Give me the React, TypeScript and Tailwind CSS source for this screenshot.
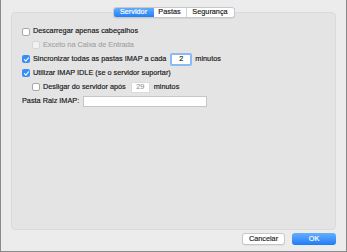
import React from "react";

const font = { fontFamily: '"Liberation Sans", Arial, sans-serif' };

function Checkbox({ checked = false, disabled = false }: { checked?: boolean; disabled?: boolean }) {
  if (checked) {
    return (
      <span className="flex size-[8px] shrink-0 items-center justify-center rounded-[2px] bg-[#3a8cf6]">
        <svg viewBox="0 0 8 8" className="size-[7px]">
          <path d="M1.6 4.2 L3.3 5.8 L6.4 2" fill="none" stroke="#fff" strokeWidth="1.3" strokeLinecap="round" strokeLinejoin="round" />
        </svg>
      </span>
    );
  }
  return (
    <span
      className={
        disabled
          ? "size-[8px] shrink-0 rounded-[2px] border border-[#d6d6d6] bg-[#f2f2f2]"
          : "size-[8px] shrink-0 rounded-[2px] border border-[#a9a9a9] bg-white"
      }
    />
  );
}

export default function App() {
  return (
    <div
      className="flex h-[252px] w-[347px] flex-col border-x border-b border-[#8a8a8a] bg-[#ececec] px-[10px] text-[7.3px] text-[#151515] [-webkit-text-stroke:0.15px]"
      style={font}
    >
      {/* segmented tabs */}
      <div className="relative z-10 mt-[7px] flex h-[11px] self-center overflow-hidden rounded-[3px] border border-[#c9c9c9] bg-white shadow-[0_0.5px_0_rgba(0,0,0,0.12)]">
        <div className="flex w-[40px] items-center justify-center bg-gradient-to-b from-[#62acfb] to-[#1f80f6] text-white">Servidor</div>
        <div className="flex w-[33px] items-center justify-center border-r border-[#d4d4d4]">Pastas</div>
        <div className="flex w-[47px] items-center justify-center">Segurança</div>
      </div>

      {/* panel */}
      <div className="-mt-[6px] flex h-[218px] flex-col rounded-[4px] border border-[#dadada] bg-[#e4e4e4] pl-[10px] pt-[12px]">
        <div className="flex h-[13px] items-center gap-[3px]">
          <Checkbox />
          <span>Descarregar apenas cabeçalhos</span>
        </div>
        <div className="flex h-[14px] items-center gap-[3px] pl-[10px] text-[#a6a6a6]">
          <Checkbox disabled />
          <span>Exceto na Caixa de Entrada</span>
        </div>
        <div className="flex h-[14px] items-center gap-[3px]">
          <Checkbox checked />
          <span>Sincronizar todas as pastas IMAP a cada</span>
          <span className="ml-[1px] flex h-[13px] w-[22px] items-center justify-center rounded-[2px] border-2 border-[#8bbaf6] bg-white">2</span>
          <span>minutos</span>
        </div>
        <div className="flex h-[14px] items-center gap-[3px]">
          <Checkbox checked />
          <span>Utilizar IMAP IDLE (se o servidor suportar)</span>
        </div>
        <div className="flex h-[14px] items-center gap-[3px] pl-[10px]">
          <Checkbox />
          <span>Desligar do servidor após</span>
          <span className="ml-[2px] flex h-[11px] w-[19px] items-center justify-center border border-[#dcdcdc] bg-white text-[#9a9a9a]">29</span>
          <span className="ml-[1px]">minutos</span>
        </div>
        <div className="flex h-[14px] items-center gap-[3px]">
          <span>Pasta Raiz IMAP:</span>
          <span className="ml-[1px] h-[11px] w-[124px] border border-[#c6c6c6] bg-white" />
        </div>
      </div>

      {/* buttons */}
      <div className="mt-[3px] flex justify-end gap-[7px]">
        <button type="button" className="flex h-[12px] w-[43px] items-center justify-center rounded-[3px] border border-[#c8c8c8] bg-white text-[#1e1e1e] shadow-[0_0.5px_0_rgba(0,0,0,0.1)]">
          Cancelar
        </button>
        <button type="button" className="flex h-[12px] w-[44px] items-center justify-center rounded-[3px] bg-gradient-to-b from-[#64aefc] to-[#1c7cf6] text-white">
          OK
        </button>
      </div>
    </div>
  );
}
